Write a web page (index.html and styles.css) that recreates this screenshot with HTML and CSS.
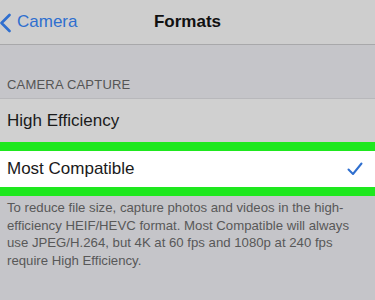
FILE: index.html
```html
<!DOCTYPE html>
<html lang="en">
<head>
  <meta charset="UTF-8">
  <meta name="viewport" content="width=device-width, initial-scale=1.0">
  <title>Formats</title>
  <link rel="stylesheet" href="styles.css">
</head>
<body>
  <div class="navbar">
    <a class="back" href="#">
      <svg class="chevron" width="12" height="20" viewBox="0 0 12 20">
        <path d="M9.5 2 L1.5 10 L9.5 18" fill="none" stroke="#2f6fcf" stroke-width="2.6" stroke-linecap="round" stroke-linejoin="round"/>
      </svg>
      <span>Camera</span>
    </a>
    <div class="navbar-title">Formats</div>
  </div>

  <div class="section-header">CAMERA CAPTURE</div>

  <div class="list">
    <div class="row">High Efficiency</div>
    <div class="row selected">
      <span>Most Compatible</span>
      <svg class="check" width="16" height="14" viewBox="0 0 16 14">
        <path d="M1.5 7.5 L6 12 L14.5 1.5" fill="none" stroke="#2f6fcf" stroke-width="2" stroke-linecap="round" stroke-linejoin="round"/>
      </svg>
    </div>
  </div>

  <p class="footer">To reduce file size, capture photos and videos in the high-efficiency HEIF/HEVC format. Most Compatible will always use JPEG/H.264, but 4K at 60 fps and 1080p at 240 fps require High Efficiency.</p>
</body>
</html>
```

FILE: styles.css
```css
body {
  font-family: "Liberation Sans", Arial, sans-serif;
  margin: 0;
  padding: 0;
  background-color: #c5c5c9;
  color: #1a1a1a;
  width: 375px;
  height: 300px;
  overflow: hidden;
}
.navbar {
  position: relative;
  height: 44px;
  background-color: #cecece;
  border-bottom: 1px solid #a8a8aa;
  display: flex;
  align-items: center;
  justify-content: center;
}
.back {
  position: absolute;
  left: 0;
  top: 0;
  height: 44px;
  display: flex;
  align-items: center;
  gap: 5px;
  color: #2f6fcf;
  text-decoration: none;
  font-size: 17px;
}
.chevron {
  margin-top: 2px;
}
.navbar-title {
  font-size: 17px;
  font-weight: bold;
  color: #111;
}
.section-header {
  height: 53px;
  box-sizing: border-box;
  padding: 32px 7px 0;
  font-size: 13px;
  color: #555;
  letter-spacing: 0.2px;
}
.list {
  border-top: 1px solid #b8b8bb;
}
.row {
  height: 44px;
  box-sizing: border-box;
  padding: 0 7px;
  display: flex;
  align-items: center;
  justify-content: space-between;
  background-color: #d0d0d0;
  font-size: 17px;
}
.selected {
  height: 54px;
  margin-top: -1px;
  background-color: #fff;
  border-top: 9px solid #1ee81e;
  border-bottom: 9px solid #1ee81e;
  padding-right: 12px;
}
.footer {
  margin: 0;
  padding: 3px 20px 0 7px;
  font-size: 13.2px;
  line-height: 17.5px;
  color: #585858;
}
```
